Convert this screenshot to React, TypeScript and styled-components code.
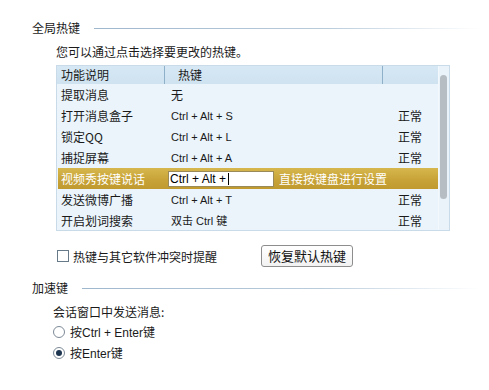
import React from "react";
import styled, { createGlobalStyle } from "styled-components";

const Global = createGlobalStyle`
  html, body { margin: 0; padding: 0; background: #fff; }
  body { width: 489px; height: 390px; overflow: hidden;
    font-family: "Noto Sans CJK SC", "Liberation Sans", sans-serif; font-size: 12px; color: #1a1a1a; }
`;

const Page = styled.div`
  padding: 20px 9px 0 32px;
  display: flex;
  flex-direction: column;
`;

const SectionHead = styled.div<{ $mt?: number }>`
  display: flex;
  align-items: center;
  height: 16px;
  margin-top: ${(p) => p.$mt ?? 0}px;
  gap: 14px;
`;

const SectionTitle = styled.span`
  font-size: 12px;
  line-height: 16px;
  color: #1a1a1a;
`;

const Rule = styled.div`
  flex: 1;
  height: 1px;
  background: linear-gradient(90deg, #9fb7cd 0%, #b9ccdc 60%, rgba(220,230,238,0) 100%);
`;

const Indent = styled.div<{ $left: number; $mt?: number }>`
  margin-left: ${(p) => p.$left}px;
  margin-top: ${(p) => p.$mt ?? 0}px;
  display: flex;
  flex-direction: column;
`;

const Text = styled.div`
  line-height: 14px;
  height: 14px;
`;

const Table = styled.div`
  position: relative;
  margin-top: 6px;
  width: 394px;
  height: 166px;
  box-sizing: border-box;
  border: 1px solid #c9dae8;
  background: #eaf4fa;
`;

const HeaderRow = styled.div`
  display: grid;
  grid-template-columns: 108px 218px 1fr;
  height: 18px;
  background: linear-gradient(#d6e8f4, #cfe2f0);
  align-items: center;
`;

const HeadCell = styled.div<{ $pad: number; $divider?: boolean }>`
  height: 18px;
  line-height: 18px;
  padding-left: ${(p) => p.$pad}px;
  box-sizing: border-box;
  border-right: ${(p) => (p.$divider ? "1px solid #8fb0c9" : "none")};
  position: relative;
`;

const Row = styled.div<{ $active?: boolean }>`
  display: grid;
  grid-template-columns: 110px 220px 1fr;
  height: 21px;
  align-items: center;
  margin: 0 11px 0 1px;
  color: ${(p) => (p.$active ? "#fff" : "#1a1a1a")};
  background: ${(p) => (p.$active ? "linear-gradient(#d6b74e, #c7a236 60%, #c09a2e)" : "transparent")};
`;

const Cell = styled.div<{ $pad?: number; $latin?: boolean }>`
  padding-left: ${(p) => p.$pad ?? 0}px;
  white-space: nowrap;
  font-family: ${(p) => (p.$latin ? '"Liberation Sans", "Noto Sans CJK SC", sans-serif' : '"Noto Sans CJK SC", sans-serif')};
  font-size: ${(p) => (p.$latin ? 11 : 12)}px;
  line-height: 14px;
  display: flex;
  align-items: center;
`;

const KeyInput = styled.div`
  width: 106px;
  height: 16px;
  box-sizing: border-box;
  background: #fff;
  border: 1px solid #9a8a5a;
  color: #000;
  font-family: "Liberation Sans", sans-serif;
  font-size: 12px;
  line-height: 14px;
  padding-left: 1px;
  display: flex;
  align-items: center;
`;

const Caret = styled.span`
  display: inline-block;
  width: 1px;
  height: 12px;
  background: #000;
  margin-left: 2px;
`;

const Hint = styled.span`
  margin-left: 5px;
  color: #fff;
  font-family: "Noto Sans CJK SC", sans-serif;
  font-size: 12px;
`;

const ScrollTrack = styled.div`
  position: absolute;
  right: 0;
  top: 0;
  bottom: 0;
  width: 10px;
  background: #e9f3f9;
  border-left: 1px solid #f2f8fc;
`;

const ScrollThumb = styled.div`
  position: absolute;
  left: 1px;
  top: 9px;
  width: 7px;
  height: 124px;
  border-radius: 4px;
  background: #b6bdc3;
`;

const Options = styled.div`
  display: flex;
  align-items: center;
  margin-top: 14px;
  height: 22px;
`;

const Check = styled.span`
  width: 12px;
  height: 12px;
  box-sizing: border-box;
  border: 1px solid #667a8a;
  background: #fff;
  margin-left: 1px;
  margin-right: 4px;
`;

const Button = styled.button`
  margin-left: 44px;
  width: 92px;
  height: 22px;
  box-sizing: border-box;
  border: 1px solid #8d8d8d;
  border-radius: 3px;
  background: linear-gradient(#ffffff, #f2f2f2);
  font-family: "Noto Sans CJK SC", sans-serif;
  font-size: 13px;
  color: #111;
  padding: 0;
  line-height: 18px;
`;

const Radio = styled.label<{ $mt?: number }>`
  display: flex;
  align-items: center;
  height: 21px;
  gap: 5px;
  margin-top: ${(p) => p.$mt ?? 0}px;
`;

const RadioDot = styled.span<{ $on?: boolean }>`
  width: 12px;
  height: 12px;
  box-sizing: border-box;
  border-radius: 50%;
  border: 1px solid #7d8a96;
  background: #fff;
  display: flex;
  align-items: center;
  justify-content: center;
  &::after {
    content: "";
    width: 6px;
    height: 6px;
    border-radius: 50%;
    background: ${(p) => (p.$on ? "#1e3550" : "transparent")};
  }
`;

const Latin = styled.span`
  font-family: "Liberation Sans", sans-serif;
  font-size: 12px;
`;

const rows: { name: string; key: string; state?: string; latinKey?: boolean; active?: boolean }[] = [
  { name: "提取消息", key: "无" },
  { name: "打开消息盒子", key: "Ctrl + Alt + S", state: "正常", latinKey: true },
  { name: "锁定QQ", key: "Ctrl + Alt + L", state: "正常", latinKey: true },
  { name: "捕捉屏幕", key: "Ctrl + Alt + A", state: "正常", latinKey: true },
  { name: "视频秀按键说话", key: "", active: true },
  { name: "发送微博广播", key: "Ctrl + Alt + T", state: "正常", latinKey: true },
  { name: "开启划词搜索", key: "双击 Ctrl 键", state: "正常", latinKey: true },
];

export default function App() {
  return (
    <>
      <Global />
      <Page>
        <SectionHead>
          <SectionTitle>全局热键</SectionTitle>
          <Rule />
        </SectionHead>
        <Indent $left={24} $mt={9}>
          <Text>您可以通过点击选择要更改的热键。</Text>
          <Table>
            <HeaderRow>
              <HeadCell $pad={4} $divider>功能说明</HeadCell>
              <HeadCell $pad={13} $divider>热键</HeadCell>
              <HeadCell $pad={0} />
            </HeaderRow>
            {rows.map((r) => (
              <Row key={r.name} $active={r.active}>
                <Cell $pad={3}>{r.name}</Cell>
                {r.active ? (
                  <Cell $latin>
                    <KeyInput>
                      Ctrl + Alt +<Caret />
                    </KeyInput>
                    <Hint>直接按键盘进行设置</Hint>
                  </Cell>
                ) : (
                  <Cell $latin={r.latinKey} $pad={3}>
                    {r.key}
                  </Cell>
                )}
                <Cell $pad={10}>{r.state ?? ""}</Cell>
              </Row>
            ))}
            <ScrollTrack>
              <ScrollThumb />
            </ScrollTrack>
          </Table>
          <Options>
            <Check />
            <span>热键与其它软件冲突时提醒</span>
            <Button>恢复默认热键</Button>
          </Options>
        </Indent>
        <SectionHead $mt={13}>
          <SectionTitle>加速键</SectionTitle>
          <Rule />
        </SectionHead>
        <Indent $left={21} $mt={9}>
          <Text>会话窗口中发送消息:</Text>
          <Radio $mt={2}>
            <RadioDot />
            <span>
              按<Latin>Ctrl + Enter</Latin>键
            </span>
          </Radio>
          <Radio>
            <RadioDot $on />
            <span>
              按<Latin>Enter</Latin>键
            </span>
          </Radio>
        </Indent>
      </Page>
    </>
  );
}
